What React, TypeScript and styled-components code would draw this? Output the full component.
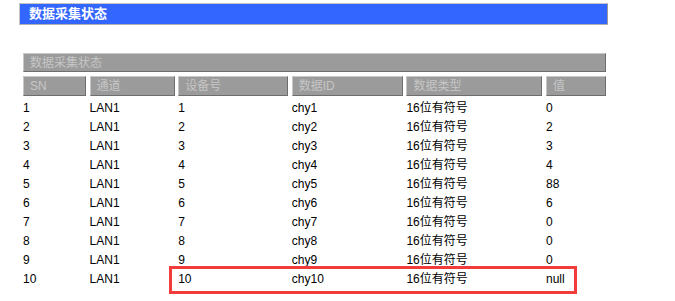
import React from 'react'
import styled, { createGlobalStyle } from 'styled-components'

const GlobalStyle = createGlobalStyle`
    body {
        margin: 0;
        background: #fff;
        font-family: Tahoma, "Liberation Sans", "Noto Sans CJK SC", sans-serif;
        font-size: 12px;
        color: #000;
    }
`

const Page = styled.div`
    position: relative;
    width: 675px;
    height: 301px;
    padding: 3px 0 0 19px;
    box-sizing: border-box;
`

const TitleBar = styled.div`
    box-sizing: border-box;
    width: 589px;
    height: 22px;
    padding-left: 9px;

    font-size: 13px;
    font-weight: bold;
    line-height: 20px;

    color: #fff;
    background-color: #3366ff;
    border: 1px solid #c4c4c4;
    border-right-color: #9a9a9a;
    border-bottom-color: #b0b0b0;
`

const Table = styled.div`
    display: grid;
    grid-template-columns: 63px 85px 110px 111px 136px 60px;
    column-gap: 3.6px;
    width: 582px;
    margin: 28px 0 0 4px;
`

const GreyCell = styled.div<{ $span?: number }>`
    grid-column: ${p => (p.$span ? `span ${p.$span}` : 'auto')};
    box-sizing: border-box;
    height: ${p => (p.$span ? '19px' : '20px')};
    padding-left: 6px;
    margin-bottom: ${p => (p.$span ? '4px' : '3px')};

    line-height: 18px;
    white-space: nowrap;

    color: #c6c6c6;
    background-color: #9b9b9b;
    border: 1px solid #c8c8c8;
    border-right-color: #6e6e6e;
    border-bottom-color: #6e6e6e;
`

const Cell = styled.div`
    height: 19px;
    line-height: 19px;
    white-space: nowrap;
`

const Highlight = styled.div`
    position: absolute;
    left: 169px;
    top: 266px;
    width: 408px;
    height: 28px;
    box-sizing: border-box;
    border: 3px solid #f23b3b;
`

const columns = ['SN', '通道', '设备号', '数据ID', '数据类型', '值']
const values = ['0', '2', '3', '4', '88', '6', '0', '0', '0', 'null']

export default function App() {
    return (
        <Page>
            <GlobalStyle />
            <TitleBar>数据采集状态</TitleBar>

            <Table>
                <GreyCell $span={6}>数据采集状态</GreyCell>
                {columns.map(c => <GreyCell key={c}>{c}</GreyCell>)}

                {values.map((v, i) => (
                    <React.Fragment key={i}>
                        <Cell>{i + 1}</Cell>
                        <Cell>LAN1</Cell>
                        <Cell>{i + 1}</Cell>
                        <Cell>chy{i + 1}</Cell>
                        <Cell>16位有符号</Cell>
                        <Cell>{v}</Cell>
                    </React.Fragment>
                ))}
            </Table>

            <Highlight />
        </Page>
    )
}
